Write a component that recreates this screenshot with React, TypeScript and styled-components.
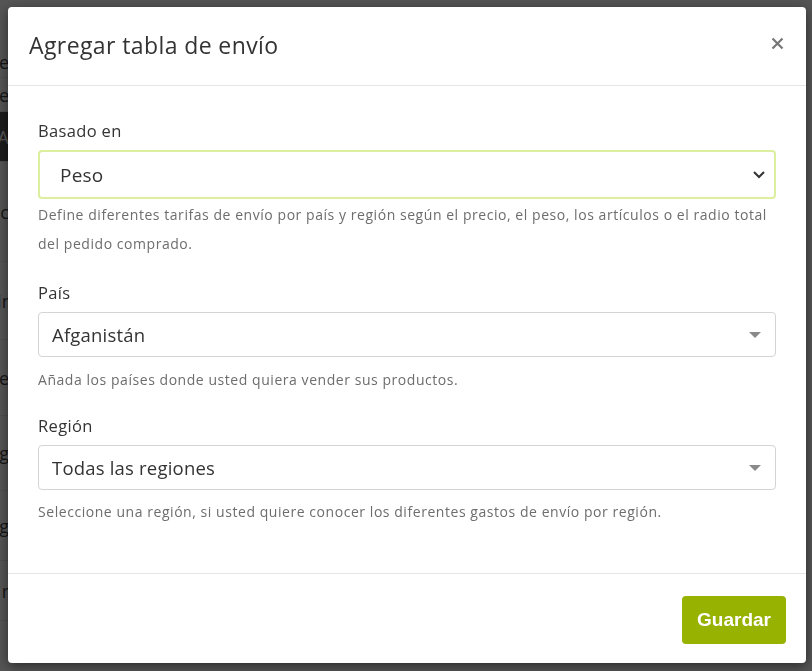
import React from "react";
import styled, { createGlobalStyle } from "styled-components";

const GlobalStyle = createGlobalStyle`
  html, body {
    margin: 0;
    padding: 0;
    background: #ffffff;
    font-family: "Open Sans", Lato, "Liberation Sans", sans-serif;
  }
  * { box-sizing: border-box; }
`;

const Page = styled.div`
  width: 812px;
  height: 671px;
  overflow: hidden;
  display: flex;
  justify-content: space-between;
`;

const PageEdge = styled.div`
  width: 9px;
  overflow: hidden;
  display: flex;
  flex-direction: column;
  align-items: flex-end;
  padding-top: 46px;
  color: #333;
  font-size: 18px;
`;

type GhostProps = { h: number; dark?: boolean };

const GhostRow = styled.div<GhostProps>`
  height: ${(p) => p.h}px;
  width: 60px;
  display: flex;
  align-items: center;
  justify-content: flex-end;
  white-space: nowrap;
  background: ${(p) => (p.dark ? "#555" : "transparent")};
  color: ${(p) => (p.dark ? "#fff" : "#444")};
  border-bottom: 1px solid #ececec;
`;

const Overlay = styled.div`
  position: fixed;
  inset: 0;
  background: rgba(0, 0, 0, 0.67);
  padding: 7px 6px 8px 8px;
`;

const Modal = styled.div`
  width: 798px;
  height: 656px;
  background: #fff;
  border-radius: 4px;
  box-shadow: 0 3px 12px rgba(0, 0, 0, 0.5);
  display: flex;
  flex-direction: column;
`;

const Header = styled.div`
  height: 79px;
  flex-shrink: 0;
  display: flex;
  align-items: center;
  justify-content: space-between;
  padding: 0 22px 2px 21px;
  border-bottom: 1px solid #e5e5e5;
`;

const Title = styled.h4`
  margin: 0;
  font-size: 23px;
  font-weight: 400;
  color: #333;
  letter-spacing: 0.4px;
`;

const Close = styled.button`
  border: 0;
  background: none;
  padding: 0;
  width: 13px;
  height: 13px;
  cursor: pointer;
  display: flex;
  margin-bottom: 4px;
`;

const Body = styled.div`
  flex: 1;
  padding: 35px 30px 0 30px;
  border-bottom: 1px solid #e5e5e5;
`;

type GroupProps = { gap: number };

const Group = styled.div<GroupProps>`
  margin-bottom: ${(p) => p.gap}px;
`;

const Label = styled.label`
  display: block;
  font-size: 16.5px;
  line-height: 20px;
  letter-spacing: 0.35px;
  color: #333;
  margin-bottom: 9px;
`;

type SelectBoxProps = { focused?: boolean };

const SelectBox = styled.div<SelectBoxProps>`
  height: ${(p) => (p.focused ? 49 : 45)}px;
  border: ${(p) => (p.focused ? "2px solid #dcef9e" : "1px solid #d4d4d4")};
  border-radius: 4px;
  display: flex;
  align-items: center;
  justify-content: space-between;
  padding: ${(p) => (p.focused ? "0 8px 0 20px" : "0 14px 0 13px")};
  font-size: ${(p) => (p.focused ? 19 : 18.5)}px;
  letter-spacing: 0.2px;
  color: #333;
  background: #fff;
`;

type HelpProps = { top: number };

const Help = styled.p<HelpProps>`
  margin: ${(p) => p.top}px 0 0 0;
  font-size: 14px;
  line-height: 29px;
  letter-spacing: 0.55px;
  color: #6d6d6d;
`;

const Footer = styled.div`
  height: 89px;
  flex-shrink: 0;
  display: flex;
  align-items: center;
  justify-content: flex-end;
  padding: 0 20px 0 0;
`;

const SaveButton = styled.button`
  width: 104px;
  height: 48px;
  border: 0;
  border-radius: 4px;
  background: #97b200;
  color: #fff;
  font-family: "Liberation Sans", Arial, sans-serif;
  font-size: 19px;
  font-weight: 700;
  cursor: pointer;
  margin-top: 2px;
`;

const Chevron = () => (
  <svg width="14" height="9" viewBox="0 0 14 9">
    <path d="M2 2 L7 7 L12 2" stroke="#333" strokeWidth="2" fill="none" />
  </svg>
);

const Caret = () => (
  <svg width="12" height="6" viewBox="0 0 12 6">
    <path d="M0 0 L12 0 L6 6 Z" fill="#8a8a8a" />
  </svg>
);

const CloseIcon = () => (
  <svg width="13" height="13" viewBox="0 0 13 13">
    <path d="M1.5 1.5 L11.5 11.5 M11.5 1.5 L1.5 11.5" stroke="#777" strokeWidth="2.2" />
  </svg>
);

const App = () => {
  return (
    <>
      <GlobalStyle />
      <Page>
        <PageEdge>
          <GhostRow h={32}>Tarifas de</GhostRow>
          <GhostRow h={34}>Ordene</GhostRow>
          <GhostRow h={50} dark>
            A
          </GhostRow>
          <GhostRow h={100}>Zonas de envío c</GhostRow>
          <GhostRow h={78}>Elegir</GhostRow>
          <GhostRow h={76}>Tabla de</GhostRow>
          <GhostRow h={75}>Carg</GhostRow>
          <GhostRow h={70}>Pag</GhostRow>
          <GhostRow h={60}>r</GhostRow>
        </PageEdge>
        <PageEdge />
      </Page>
      <Overlay>
        <Modal>
          <Header>
            <Title>Agregar tabla de envío</Title>
            <Close aria-label="Cerrar">
              <CloseIcon />
            </Close>
          </Header>
          <Body>
            <Group gap={25}>
              <Label>Basado en</Label>
              <SelectBox focused>
                <span>Peso</span>
                <Chevron />
              </SelectBox>
              <Help top={1}>
                Define diferentes tarifas de envío por país y región según el precio, el peso, los
                artículos o el radio total del pedido comprado.
              </Help>
            </Group>
            <Group gap={22}>
              <Label>País</Label>
              <SelectBox>
                <span>Afganistán</span>
                <Caret />
              </SelectBox>
              <Help top={8}>Añada los países donde usted quiera vender sus productos.</Help>
            </Group>
            <Group gap={0}>
              <Label>Región</Label>
              <SelectBox>
                <span>Todas las regiones</span>
                <Caret />
              </SelectBox>
              <Help top={7}>
                Seleccione una región, si usted quiere conocer los diferentes gastos de envío por
                región.
              </Help>
            </Group>
          </Body>
          <Footer>
            <SaveButton>Guardar</SaveButton>
          </Footer>
        </Modal>
      </Overlay>
    </>
  );
};

export default App;
